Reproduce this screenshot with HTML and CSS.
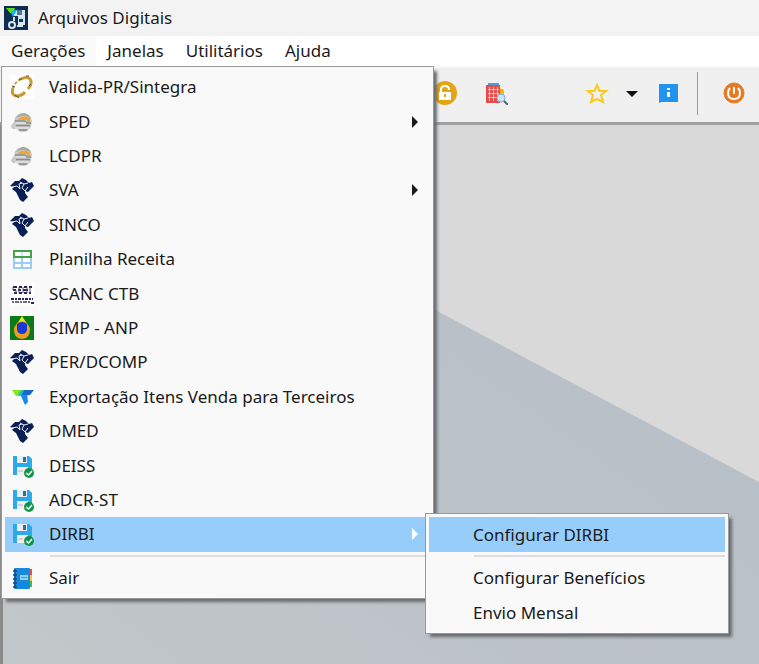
FILE: index.html
```html
<!DOCTYPE html>
<html lang="pt-BR">
<head>
    <meta charset="UTF-8">
    <meta name="viewport" content="width=device-width, initial-scale=1.0">
    <title>Arquivos Digitais</title>
    <link rel="stylesheet" href="styles.css">
</head>
<body>
    <!-- Ícones que se repetem no menu -->
    <svg class="sprites" aria-hidden="true">
        <symbol id="sped" viewBox="0 0 24 24">
            <path d="M3 19 Q1 18 1 16 L4 12 Q4 4 13 3 Q21 4 22 11 L21 17 Q18 22 13 22 Q8 22 7 19Z" fill="#c9c9c9"/>
            <path d="M6 8 Q9 3 14 3 Q19 4 21 8 Q13 4 6 8Z" fill="#a9a9a9"/>
            <path d="M9 8 Q15 5 20 8 V12 H17 V10 H8Z" fill="#f6a623"/>
            <path d="M5 11 H15 L17 13 H21" fill="none" stroke="#909090" stroke-width="1.500"/>
            <path d="M6 13 H16 M5 18 H19" stroke="#eee"/>
            <path d="M6 15.500 H20 M9 20 H17" stroke="#8b8b8b" stroke-width="1.500"/>
        </symbol>
        <symbol id="receita" viewBox="0 0 24 24">
            <path d="M12 0 L16 2 L19 5 L22 4 L24 8 L18 14 L15 13 L15 15 L18 19 L13 24 L10 22 L8 18 L6 14 L2 11 L4 9 L0 8 L5 3 L9 3Z" fill="#0b1f57"/>
            <path d="M2 9 L7 8 L10 11 L9 6 L12 5 M10 4 L14 6 L18 5 M14 6 L12 10 L15 13 L18 9" fill="none" stroke="#eef0f5"/>
        </symbol>
        <symbol id="disquete" viewBox="0 0 24 24">
            <path d="M3 2 H19 L22 5 V21 H3Z" fill="#2aaae8"/>
            <path d="M7 2 H17 V9 H7Z" fill="#eceff1"/>
            <path d="M13 3 H16 V8 H13Z" fill="#29709b"/>
            <path d="M7 13 H18 V21 H7Z" fill="#f1eef0"/>
            <path d="M8 17 H13" stroke="#dccfd7" stroke-width="2"/>
            <circle cx="19" cy="19" r="5" fill="#109447"/>
            <path d="M16 19 L18.500 21 L22 17" fill="none" stroke="#fff" stroke-width="1.500"/>
        </symbol>
        <symbol id="seta" viewBox="0 0 8 12">
            <path d="M1 0 L7 6 L1 12Z" fill="currentColor"/>
        </symbol>
    </svg>

    <header class="titulo">
        <svg class="logo" viewBox="0 0 24 24" aria-hidden="true">
            <rect width="24" height="24" fill="#0d2d52"/>
            <path d="M9 4 H21 V19 H14 V10 H10Z" fill="#d9e5ee"/>
            <path d="M13 4 H18 V9 H13Z" fill="#537894"/>
            <path d="M15 13 H19 V16 H15Z" fill="#123b67"/>
            <path d="M2 2 H11 L9 7 H6Z" fill="#62dd18"/>
            <path d="M9 4 H13 L9 11 L7 7Z" fill="#16b3e6"/>
            <circle cx="8" cy="19" r="3" fill="none" stroke="#d9e5ee" stroke-width="2"/>
            <path d="M10 15 V11 M13 20 H19" stroke="#d9e5ee" stroke-width="2"/>
        </svg>
        <h1>Arquivos Digitais</h1>
    </header>

    <nav class="barra-menu">
        <div class="menu-raiz">
            <button class="aba ativa">Gerações</button>
            <ul class="menu menu-principal">
                <li>
                    <button class="item">
                        <svg class="icone" viewBox="0 0 24 24" aria-hidden="true">
                            <rect width="24" height="24" fill="#fff"/>
                            <path d="M11 4 Q17 1 20 4 Q23 9 18 14 M3 13 Q1 20 6 21 Q12 21 15 17" fill="none" stroke="#c99a2e" stroke-width="3"/>
                            <path d="M11 4 Q5 7 3 13" fill="none" stroke="#c99a2e" stroke-width="2" stroke-dasharray="3 2"/>
                            <path d="M9 4 H12 M16 1 H19 M2 11 L5 12 M5 20 L9 23 M19 11 L21 9" fill="none" stroke="#55513f" stroke-width="1"/>
                        </svg>
                        <span>Valida-PR/Sintegra</span>
                    </button>
                </li>
                <li>
                    <button class="item">
                        <svg class="icone" aria-hidden="true"><use href="#sped"/></svg>
                        <span>SPED</span>
                        <svg class="seta" aria-hidden="true"><use href="#seta"/></svg>
                    </button>
                </li>
                <li>
                    <button class="item">
                        <svg class="icone" aria-hidden="true"><use href="#sped"/></svg>
                        <span>LCDPR</span>
                    </button>
                </li>
                <li>
                    <button class="item">
                        <svg class="icone" aria-hidden="true"><use href="#receita"/></svg>
                        <span>SVA</span>
                        <svg class="seta" aria-hidden="true"><use href="#seta"/></svg>
                    </button>
                </li>
                <li>
                    <button class="item">
                        <svg class="icone" aria-hidden="true"><use href="#receita"/></svg>
                        <span>SINCO</span>
                    </button>
                </li>
                <li>
                    <button class="item">
                        <svg class="icone" viewBox="0 0 24 24" aria-hidden="true">
                            <path d="M4 10 H21 V21 H4Z M4 16 H21 M12 10 V21" fill="#fff" stroke="#9bcdf3" stroke-width="2"/>
                            <path d="M4 4 H21 V10 H4Z" fill="#fff" stroke="#45a247" stroke-width="2"/>
                            <path d="M12 5 V9" stroke="#9bcdf3"/>
                        </svg>
                        <span>Planilha Receita</span>
                    </button>
                </li>
                <li>
                    <button class="item">
                        <svg class="icone" viewBox="0 0 24 24" aria-hidden="true">
                            <rect width="24" height="24" fill="#fff"/>
                            <path d="M3 5 H7 M9 5 H12 M14 5 H17 M19 5 H22 M3 8 H6 M8 8 H11 M13 8 H18 M4 11 H7 M9 11 H12 M14 11 H17 M19 11 H21" stroke="#27264f" stroke-width="2"/>
                            <path d="M3 5 V8 M6 8 V11 M9 5 V11 M13 5 V11 M17 5 V11 M20 5 V11" stroke="#55557a"/>
                            <path d="M1 17 H23" stroke="#27264f" stroke-width="2" stroke-dasharray="3 1 2 1"/>
                            <path d="M2 20 H20" stroke="#6c6b8c" stroke-width="2" stroke-dasharray="2 1 4 1"/>
                            <path d="M21 21 H24" stroke="#27264f" stroke-width="2"/>
                        </svg>
                        <span>SCANC CTB</span>
                    </button>
                </li>
                <li>
                    <button class="item">
                        <svg class="icone" viewBox="0 0 24 24" aria-hidden="true">
                            <rect width="24" height="24" fill="#087c15"/>
                            <path d="M12 0 L17 8 H7Z" fill="#f7e51b"/>
                            <path d="M7 7 Q12 3 17 7 L20 12 Q20 23 12 23 Q3 22 4 12Z" fill="#f39a22"/>
                            <path d="M7 8 Q12 4 17 8 V14 Q16 18 12 18 Q8 18 7 14Z" fill="#173bd0"/>
                        </svg>
                        <span>SIMP - ANP</span>
                    </button>
                </li>
                <li>
                    <button class="item">
                        <svg class="icone" aria-hidden="true"><use href="#receita"/></svg>
                        <span>PER/DCOMP</span>
                    </button>
                </li>
                <li>
                    <button class="item">
                        <svg class="icone" viewBox="0 0 24 24" aria-hidden="true">
                            <path d="M2 5 H14 L10 11 H6Z" fill="#88e619"/>
                            <path d="M9 7 L12 5 H15 L11 11 L8 10Z" fill="#18c5bd"/>
                            <path d="M14 5 H24 L20 10 L11 11Z" fill="#1769c4"/>
                            <path d="M11 11 L17 9 L18 17 L15 20Z" fill="#1687ec"/>
                        </svg>
                        <span>Exportação Itens Venda para Terceiros</span>
                    </button>
                </li>
                <li>
                    <button class="item">
                        <svg class="icone" aria-hidden="true"><use href="#receita"/></svg>
                        <span>DMED</span>
                    </button>
                </li>
                <li>
                    <button class="item">
                        <svg class="icone" aria-hidden="true"><use href="#disquete"/></svg>
                        <span>DEISS</span>
                    </button>
                </li>
                <li>
                    <button class="item">
                        <svg class="icone" aria-hidden="true"><use href="#disquete"/></svg>
                        <span>ADCR-ST</span>
                    </button>
                </li>
                <li class="com-submenu">
                    <button class="item selecionado">
                        <svg class="icone" aria-hidden="true"><use href="#disquete"/></svg>
                        <span>DIRBI</span>
                        <svg class="seta" aria-hidden="true"><use href="#seta"/></svg>
                    </button>
                    <ul class="menu submenu">
                        <li><button class="item selecionado"><span>Configurar DIRBI</span></button></li>
                        <li class="separador"></li>
                        <li><button class="item"><span>Configurar Benefícios</span></button></li>
                        <li><button class="item"><span>Envio Mensal</span></button></li>
                    </ul>
                </li>
                <li class="separador"></li>
                <li>
                    <button class="item">
                        <svg class="icone" viewBox="0 0 24 24" aria-hidden="true">
                            <path d="M19 3 H22 V9 H19Z" fill="#ef4848"/>
                            <path d="M19 9 H22 V15 H19Z" fill="#f6c72e"/>
                            <path d="M19 15 H22 V21 H19Z" fill="#38bd54"/>
                            <rect x="4" y="2" width="16" height="21" rx="1" fill="#1689dc"/>
                            <path d="M5 3 V22" stroke="#0e61a9" stroke-width="2"/>
                            <path d="M3 5 H7 M3 9 H7 M3 13 H7 M3 17 H7 M3 21 H7" stroke="#174d82" stroke-width="1.500"/>
                            <path d="M10 9 H18 V14 H10Z" fill="#8cd1f7"/>
                            <path d="M11 11.500 H17" stroke="#3b9fdd"/>
                        </svg>
                        <span>Sair</span>
                    </button>
                </li>
            </ul>
        </div>
        <button class="aba">Janelas</button>
        <button class="aba">Utilitários</button>
        <button class="aba">Ajuda</button>
    </nav>

    <div class="ferramentas">
        <div class="grupo grupo-arquivos">
            <button class="ferramenta" aria-label="Bloquear">
                <svg viewBox="0 0 24 24">
                    <circle cx="12" cy="12" r="12" fill="#e4a514"/>
                    <path d="M8 11 V9 Q8 5 12 5 Q16 5 16 9" fill="none" stroke="#fff" stroke-width="2"/>
                    <rect x="6" y="11" width="12" height="8" fill="#fff"/>
                    <path d="M12 13 V16" stroke="#e4a514" stroke-width="2"/>
                </svg>
            </button>
            <button class="ferramenta" aria-label="Pesquisar">
                <svg viewBox="0 0 24 24">
                    <path d="M4 3 H15" stroke="#43a1e5" stroke-width="2"/>
                    <path d="M16 7 L20 9 V16 H16Z" fill="#f6b716"/>
                    <rect x="2" y="4" width="14" height="18" fill="#e44b49"/>
                    <path d="M4 8.500 H15 M4 12.500 H15 M4 16.500 H15 M5.500 6 V20 M9.500 6 V20 M13.500 6 V20" stroke="#f8c5c2"/>
                    <path d="M19 19 L24 24" stroke="#526272" stroke-width="2"/>
                    <circle cx="17" cy="17" r="4" fill="#c5e5f8" stroke="#7faecb"/>
                </svg>
            </button>
        </div>
        <div class="grupo">
            <button class="ferramenta" aria-label="Favoritos">
                <svg viewBox="0 0 24 24">
                    <path d="M12 4 L14.500 10 H21 L16 14 L18 21 L12 18 L6 21 L8 14 L3 10 H9.500Z" fill="none" stroke="#fbc91b" stroke-width="2"/>
                </svg>
            </button>
            <button class="ferramenta" aria-label="Lista de favoritos">
                <svg viewBox="0 0 24 24"><path d="M5 10 H17 L11 16Z" fill="#111"/></svg>
            </button>
            <button class="ferramenta" aria-label="Informações">
                <svg viewBox="0 0 24 24">
                    <path d="M2 3 H21 V21 H4 L2 22Z" fill="#2094ee"/>
                    <path d="M10 7 H13 V9 H10Z M10 11 H13 V16 H10Z" fill="#fff"/>
                </svg>
            </button>
        </div>
        <div class="divisor"></div>
        <button class="ferramenta" aria-label="Desligar">
            <svg viewBox="0 0 24 24">
                <circle cx="12" cy="12" r="10" fill="#e67a22" stroke="#e67a22"/>
                <path d="M8 7 Q6 9 6 12 Q6 18 12 18 Q18 18 18 12 Q18 9 16 7 M12 6 V13" fill="none" stroke="#fff" stroke-width="2"/>
            </svg>
        </button>
    </div>

    <main class="area">
        <svg class="fundo" viewBox="0 0 756 539" preserveAspectRatio="none" aria-hidden="true">
            <defs>
                <linearGradient id="cinza" x1="1" y1="0" x2="0" y2="1">
                    <stop offset="0%" stop-color="#b6bfc7"/>
                    <stop offset="50%" stop-color="#bac1c7"/>
                    <stop offset="100%" stop-color="#c2c7ca"/>
                </linearGradient>
            </defs>
            <path d="M0 0 H84 L756 357 V539 H0Z" fill="url(#cinza)"/>
        </svg>
    </main>
</body>
</html>
```
FILE: styles.css
```css
* {
    box-sizing: border-box;
}
body {
    display: flex;
    flex-direction: column;
    min-height: 100vh;
    margin: 0;
    overflow: hidden;
    background-color: #d9d9d9;
    font-family: "Noto Sans", "Open Sans", sans-serif;
    font-size: 17px;
    line-height: 24px;
    color: #1a1a1a;
}
button {
    margin: 0;
    padding: 0;
    border: none;
    background: none;
    font: inherit;
    color: inherit;
    text-align: left;
    white-space: nowrap;
}
.sprites {
    position: absolute;
    width: 0;
    height: 0;
}

/* Barra de título */
.titulo {
    display: flex;
    align-items: center;
    gap: 10px;
    height: 36px;
    padding: 0 4px;
    background-color: #f3f3f3;
}
.titulo h1 {
    margin: 0;
    font-size: 17px;
    font-weight: normal;
}
.logo {
    width: 24px;
    height: 24px;
}

/* Barra de menus */
.barra-menu {
    display: flex;
    height: 30px;
    background-color: #fff;
}
.menu-raiz {
    position: relative;
    display: flex;
}
.aba {
    padding: 0 11px;
}
.aba.ativa {
    background-color: #fafafa;
}

/* Menus suspensos */
.menu {
    position: absolute;
    z-index: 1;
    display: flex;
    flex-direction: column;
    margin: 0;
    padding: 3px;
    list-style: none;
    background-color: #f9f9f9;
    border: 1px solid #999;
    box-shadow: 4px 4px 3px -1px #666b6e;
}
.menu li {
    display: flex;
    flex: 1 0 34px;
}
.menu-principal {
    top: 100%;
    left: 1px;
    width: 433px;
    min-height: 533px;
}
.item {
    display: flex;
    flex: 1;
    align-items: center;
    padding: 0 11px 0 5px;
}
.item span {
    flex: 1;
}
.icone {
    width: 24px;
    height: 24px;
    margin-right: 15px;
}
.seta {
    width: 8px;
    height: 12px;
}
.item.selecionado {
    background-color: #96cdfb;
}
.selecionado .seta {
    color: #fff;
}
.menu .separador {
    flex: 0 0 9px;
    margin-left: 45px;
    background: linear-gradient(#dcdcdc, #dcdcdc) 0 3px / 100% 2px no-repeat;
}
.com-submenu {
    position: relative;
}
.submenu {
    top: -4px;
    left: 420px;
    width: 304px;
    min-height: 121px;
}
.submenu .item {
    padding-left: 44px;
}

/* Barra de ferramentas */
.ferramentas {
    display: flex;
    align-items: center;
    height: 59px;
    padding: 0 13px 4px 433px;
    background-color: #f0f0f0;
    border-top: 2px solid #f8f8f8;
    border-bottom: 3px solid #a0a0a0;
}
.grupo {
    display: flex;
    gap: 12px;
}
.grupo-arquivos {
    gap: 27px;
    margin-right: 77px;
}
.ferramenta,
.ferramenta svg {
    display: block;
    width: 24px;
    height: 24px;
}
.divisor {
    width: 2px;
    height: 43px;
    margin: 0 24px 0 16px;
    background-color: #999;
}

/* Área de trabalho */
.area {
    display: flex;
    flex: 1;
    border-left: 3px solid #8a8a8a;
}
.fundo {
    flex: 1;
    width: 100%;
}
```
